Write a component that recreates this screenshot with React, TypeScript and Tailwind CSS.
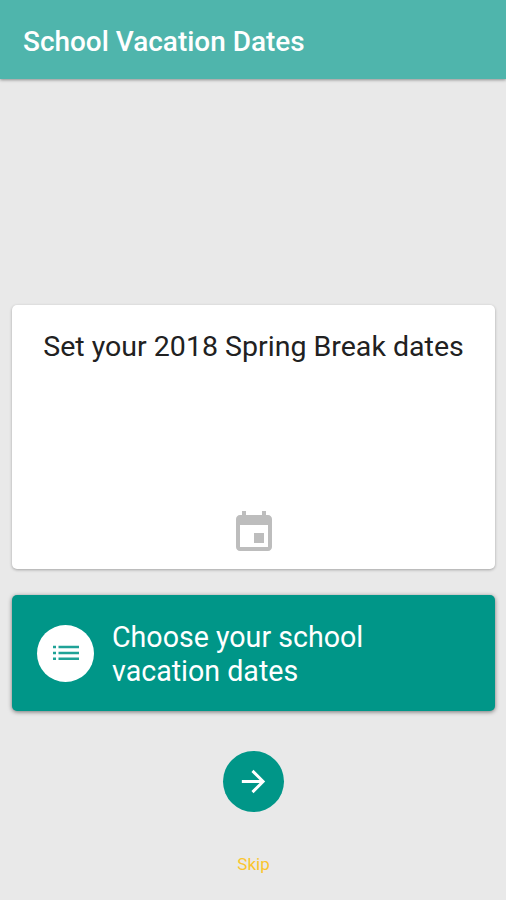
export default function App() {
  return (
    <div className="flex h-[900px] w-[506px] flex-col overflow-hidden bg-[#e9e9e9] font-['Roboto',sans-serif]">
      <header className="z-10 flex h-[79px] shrink-0 items-center bg-[#4fb5ac] px-[23px] pt-1 shadow-[0_1px_3px_rgba(0,0,0,0.4)]">
        <h1 className="whitespace-nowrap text-[27.95px] font-medium leading-8 text-white">School Vacation Dates</h1>
      </header>
      <main className="flex flex-col items-center pl-3 pr-[11px] pt-[226px]">
        <section className="flex h-[264px] w-full flex-col items-center justify-between rounded-[5px] bg-white pt-6 pb-3 shadow-[0_1px_3px_rgba(0,0,0,0.3)]">
          <h2 className="whitespace-nowrap text-[28.55px] leading-9 text-[#212121]">Set your 2018 Spring Break dates</h2>
          <svg className="size-[48px]" viewBox="0 0 24 24" fill="#bdbdbd">
            <path d="M17 12h-5v5h5v-5zM16 1v2H8V1H6v2H5c-1.11 0-1.99.9-1.99 2L3 19c0 1.1.89 2 2 2h14c1.1 0 2-.9 2-2V5c0-1.1-.9-2-2-2h-1V1h-2zm3 18H5V8h14v11z" />
          </svg>
        </section>
        <section className="mt-[26px] flex h-[116px] w-full items-center rounded-[5px] bg-[#009688] pl-[25px] shadow-[0_1px_4px_rgba(0,0,0,0.5)]">
          <div className="flex size-[57px] shrink-0 items-center justify-center rounded-full bg-white">
            <svg className="h-[16px] w-[26px]" viewBox="0 0 26 16" fill="#1fa297">
              <path d="M0 .8h3v2.5H0zM0 6.8h3v2.5H0zM0 12.4h3v2.5H0zM5.5 .8H26v2.5H5.5zM5.5 6.8H26v2.5H5.5zM5.5 12.4H26v2.5H5.5z" />
            </svg>
          </div>
          <p className="ml-[18px] whitespace-nowrap pt-[2px] text-[28.6px] leading-[34px] text-white">Choose your school<br />vacation dates</p>
        </section>
        <button className="mt-[40px] flex size-[61px] items-center justify-center rounded-full bg-[#009688]">
          <svg className="size-[35px]" viewBox="0 0 24 24" fill="white">
            <path d="M12 4l-1.41 1.41L16.17 11H4v2h12.17l-5.58 5.59L12 20l8-8z" />
          </svg>
        </button>
        <button className="mt-[42px] text-[17px] leading-5 text-[#fbc52d]">Skip</button>
      </main>
    </div>
  );
}
